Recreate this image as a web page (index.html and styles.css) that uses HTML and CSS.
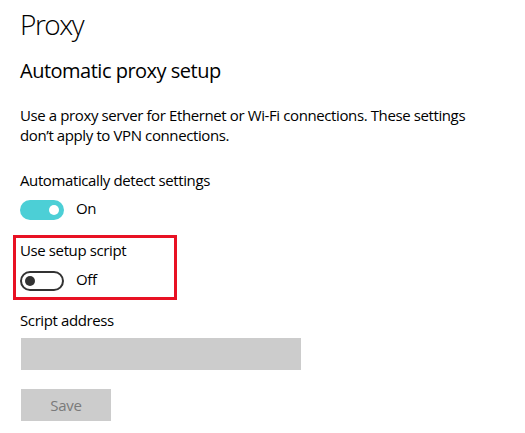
FILE: index.html
```html
<!DOCTYPE html>
<html>
<head>
<meta charset="utf-8">
<link rel="stylesheet" href="styles.css">
</head>
<body>
<main class="page">
  <h1 class="title">Proxy</h1>
  <h2 class="section">Automatic proxy setup</h2>
  <p class="desc">Use a proxy server for Ethernet or Wi-Fi connections. These settings don’t apply to VPN connections.</p>

  <div class="setting">
    <div class="label">Automatically detect settings</div>
    <div class="toggle-row">
      <span class="toggle on"><span class="knob"></span></span>
      <span class="state">On</span>
    </div>
  </div>

  <div class="setting highlighted">
    <div class="label">Use setup script</div>
    <div class="toggle-row second">
      <span class="toggle off"><span class="knob"></span></span>
      <span class="state">Off</span>
    </div>
    <div class="highlight-box"></div>
  </div>

  <div class="field">
    <div class="label">Script address</div>
    <div class="input"></div>
  </div>

  <button class="save" disabled>Save</button>
</main>
</body>
</html>
```

FILE: styles.css
```css
html, body {
  margin: 0;
  padding: 0;
  background: #ffffff;
}

body {
  font-family: "Open Sans", "Noto Sans", "Liberation Sans", sans-serif;
  color: #000000;
  width: 525px;
  height: 433px;
  overflow: hidden;
}

.page {
  padding: 6px 0 0 20px;
  display: flex;
  flex-direction: column;
  align-items: flex-start;
}

.title {
  margin: 0;
  font-size: 28px;
  font-weight: 300;
  line-height: 36px;
  letter-spacing: -1.5px;
}

.section {
  margin: 15px 0 0 0;
  font-size: 20px;
  font-weight: 400;
  line-height: 28px;
  letter-spacing: -0.5px;
}

.desc {
  margin: 20px 0 0 0;
  font-size: 15px;
  line-height: 20px;
  width: 480px;
  letter-spacing: -0.39px;
}

.label {
  font-size: 15px;
  line-height: 20px;
  letter-spacing: -0.39px;
}

.setting {
  margin-top: 25px;
}

.setting.highlighted {
  margin-top: 20px;
  position: relative;
}

.toggle-row {
  margin-top: 10px;
  display: flex;
  align-items: flex-start;
  height: 20px;
}

.toggle-row.second {
  margin-top: 11px;
}

.toggle {
  box-sizing: border-box;
  width: 44px;
  height: 20px;
  border-radius: 10px;
  display: flex;
  align-items: center;
  flex: none;
}

.toggle.on {
  background: #4ccfd6;
  justify-content: flex-end;
  padding-right: 5px;
}

.toggle.on .knob {
  background: #ffffff;
}

.toggle.off {
  border: 2px solid #333333;
  background: #ffffff;
  justify-content: flex-start;
  padding-left: 3px;
}

.toggle.off .knob {
  background: #333333;
}

.knob {
  width: 10px;
  height: 10px;
  border-radius: 50%;
}

.state {
  margin-left: 12px;
  margin-top: -2px;
  font-size: 15px;
  line-height: 20px;
  letter-spacing: -0.3px;
}

.highlight-box {
  position: absolute;
  left: -7px;
  top: -5px;
  width: 164px;
  height: 65px;
  box-sizing: border-box;
  border: 3px solid #e81123;
  pointer-events: none;
}

.field {
  margin-top: 19px;
}

.input {
  margin-top: 8px;
  width: 280px;
  height: 32px;
  background: #cccccc;
  margin-left: 1px;
}

.save {
  margin: 19px 0 0 1px;
  width: 90px;
  height: 32px;
  border: none;
  padding: 0;
  background: #cccccc;
  color: #7a7a7a;
  font-family: "Open Sans", "Noto Sans", "Liberation Sans", sans-serif;
  font-size: 15px;
  line-height: 20px;
  letter-spacing: -0.3px;
}
```
